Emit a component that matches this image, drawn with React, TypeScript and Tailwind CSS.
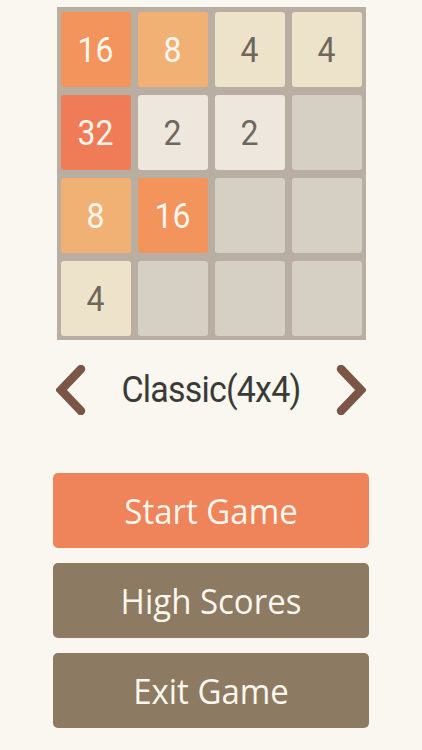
const tiles: number[] = [16, 8, 4, 4, 32, 2, 2, 0, 8, 16, 0, 0, 4, 0, 0, 0];

const tileStyle: Record<number, string> = {
  0: "bg-[#d6cfc4]",
  2: "bg-[#eee7dd] text-[#6f675d]",
  4: "bg-[#ede3ca] text-[#6f675d]",
  8: "bg-[#f1b174] text-[#fbf6ee]",
  16: "bg-[#f2945b] text-[#fbf6ee]",
  32: "bg-[#ef7c57] text-[#fbf6ee]",
};

const Board = () => {
  return (
    <div className="mx-auto mt-[7px] w-[309px] bg-[#b9aea2] pt-[5px] pb-[4px] px-[4px] grid grid-cols-4 gap-x-[7px] gap-y-[8px]">
      {tiles.map((v, i) => (
        <div
          key={i}
          className={`h-[75px] rounded-[3px] flex items-center justify-center text-[32px] font-['Roboto',sans-serif] ${tileStyle[v]}`}
        >
          <span className="scale-y-110">{v > 0 ? v : ""}</span>
        </div>
      ))}
    </div>
  );
};

const Chevron = ({ flip }: { flip?: boolean }) => (
  <svg width="30" height="50" viewBox="0 0 30 50" className={flip ? "rotate-180" : ""}>
    <path d="M25 4 L5 25 L25 46" fill="none" stroke="#7b5647" strokeWidth="8.5" strokeLinecap="round" strokeLinejoin="miter" />
  </svg>
);

const Button = ({ label, color }: { label: string; color: string }) => (
  <button
    className={`w-full h-[75px] rounded-[5px] text-[#fbf6ee] text-[33px] font-['Open_Sans',sans-serif] ${color}`}
  >
    <span className="inline-block scale-y-105">{label}</span>
  </button>
);

export default function App() {
  return (
    <div className="w-[422px] h-[750px] bg-[#f9f7ef] overflow-hidden">
      <Board />
      <div className="mt-[24px] mx-[56px] flex items-center justify-between">
        <Chevron />
        <span className="inline-block scale-y-110 text-[34px] text-[#3a3a37] font-['Roboto',sans-serif] tracking-[-0.8px]">Classic(4x4)</span>
        <Chevron flip />
      </div>
      <div className="mt-[58px] mx-[53px] flex flex-col gap-[15px]">
        <Button label="Start Game" color="bg-[#ef845b]" />
        <Button label="High Scores" color="bg-[#8c7a63]" />
        <Button label="Exit Game" color="bg-[#8c7a63]" />
      </div>
    </div>
  );
}
